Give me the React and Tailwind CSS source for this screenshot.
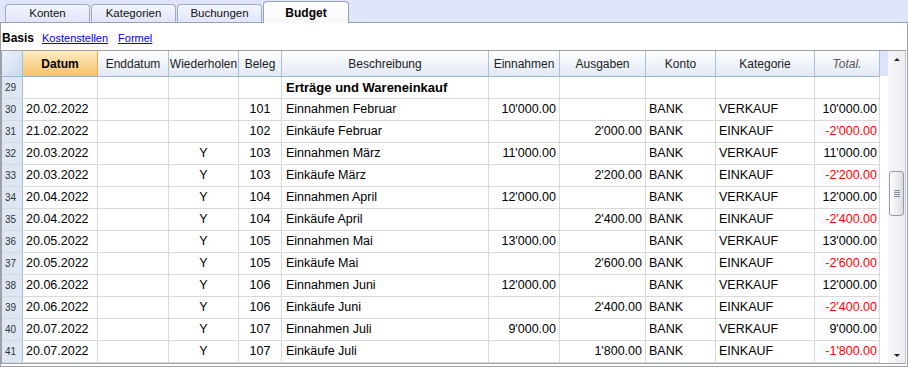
import React from 'react';

const rows = [
  ['30', '20.02.2022', '', '101', 'Einnahmen Februar', "10'000.00", '', 'VERKAUF', "10'000.00"],
  ['31', '21.02.2022', '', '102', 'Einkäufe Februar', '', "2'000.00", 'EINKAUF', "-2'000.00"],
  ['32', '20.03.2022', 'Y', '103', 'Einnahmen März', "11'000.00", '', 'VERKAUF', "11'000.00"],
  ['33', '20.03.2022', 'Y', '103', 'Einkäufe März', '', "2'200.00", 'EINKAUF', "-2'200.00"],
  ['34', '20.04.2022', 'Y', '104', 'Einnahmen April', "12'000.00", '', 'VERKAUF', "12'000.00"],
  ['35', '20.04.2022', 'Y', '104', 'Einkäufe April', '', "2'400.00", 'EINKAUF', "-2'400.00"],
  ['36', '20.05.2022', 'Y', '105', 'Einnahmen Mai', "13'000.00", '', 'VERKAUF', "13'000.00"],
  ['37', '20.05.2022', 'Y', '105', 'Einkäufe Mai', '', "2'600.00", 'EINKAUF', "-2'600.00"],
  ['38', '20.06.2022', 'Y', '106', 'Einnahmen Juni', "12'000.00", '', 'VERKAUF', "12'000.00"],
  ['39', '20.06.2022', 'Y', '106', 'Einkäufe Juni', '', "2'400.00", 'EINKAUF', "-2'400.00"],
  ['40', '20.07.2022', 'Y', '107', 'Einnahmen Juli', "9'000.00", '', 'VERKAUF', "9'000.00"],
  ['41', '20.07.2022', 'Y', '107', 'Einkäufe Juli', '', "1'800.00", 'EINKAUF', "-1'800.00"],
];

const cols = 'grid grid-cols-[21px_75px_71px_70px_43px_207px_71px_86px_70px_99px_65px]';
const cell = 'border-r border-[#d9d9d9] h-full flex items-center overflow-hidden whitespace-nowrap';
const head = 'border-r border-[#a9c0da] h-full flex items-center justify-center bg-gradient-to-b from-[#fdfeff] to-[#e2e9f5]';

const Tab = ({ label, active }) =>
  active ? (
    <div className="w-[86px] h-[22px] -mb-px relative z-10 flex items-center justify-center rounded-t-[4px] border border-b-0 border-[#98a2b3] bg-gradient-to-b from-white to-[#f7f7f7] text-[12px] font-bold text-black">
      {label}
    </div>
  ) : (
    <div className="w-[85px] h-[18px] flex items-center justify-center rounded-t-[4px] border border-b-0 border-[#a3abbb] bg-gradient-to-b from-[#f4f6fe] to-[#dfe6fa] text-[11.5px] text-[#111]">
      {label}
    </div>
  );

const Scrollbar = () => (
  <div className="w-[17px] h-full flex flex-col bg-gradient-to-r from-[#f7f6f9] to-[#eeecf1]">
    <div className="h-[16px] flex items-center justify-center">
      <div className="w-0 h-0 border-l-[3px] border-r-[3px] border-b-[3px] border-l-transparent border-r-transparent border-b-[#222]" />
    </div>
    <div className="h-[104px]" />
    <div className="mx-[1px] h-[45px] rounded-[3px] border border-[#9b9ba8] bg-gradient-to-r from-white to-[#dcdce6] flex flex-col items-center justify-center gap-[1px]">
      <div className="w-[6px] h-px bg-[#8a8a96]" />
      <div className="w-[6px] h-px bg-[#8a8a96]" />
      <div className="w-[6px] h-px bg-[#8a8a96]" />
      <div className="w-[6px] h-px bg-[#8a8a96]" />
    </div>
    <div className="flex-1" />
    <div className="h-[16px] flex items-center justify-center">
      <div className="w-0 h-0 border-l-[3px] border-r-[3px] border-t-[3px] border-l-transparent border-r-transparent border-t-[#222]" />
    </div>
  </div>
);

const App = () => {
  return (
    <div className="w-[908px] h-[367px] overflow-hidden bg-white font-['Liberation_Sans',Arial,sans-serif]">
      {/* Tabs */}
      <div className="h-[23px] bg-[#dfe6fa] border-b border-[#98a2b3] flex items-end pl-[5px] gap-[1px]">
        <Tab label="Konten" />
        <Tab label="Kategorien" />
        <Tab label="Buchungen" />
        <Tab label="Budget" active />
      </div>

      <div className="h-[344px] border-l border-r border-b border-[#98a2b3] flex flex-col">
        {/* Sub views */}
        <div className="h-[27px] flex items-center pl-px pt-[3px] text-[11px]">
          <span className="font-bold text-[12px] text-black mr-[8px]">Basis</span>
          <span className="text-[#0000ee] underline mr-[10px]">Kostenstellen</span>
          <span className="text-[#0000ee] underline">Formel</span>
        </div>

        {/* Grid */}
        <div className="w-[905px] h-[314px] border border-[#a0a0a0] border-r-[#c8c8c8] flex">
          <div className="w-[878px] flex flex-col">
            <div className={`${cols} h-[26px] border-b border-[#9fb5d0] text-[12px] text-[#222]`}>
              <div className="border-r border-[#a9c0da] h-full bg-gradient-to-br from-[#eef3fb] to-[#c9d8ee]" />
              <div className="border-r border-[#f0a848] h-full flex items-center justify-center font-bold text-black bg-gradient-to-b from-[#fdebc0] to-[#f7c266]">
                Datum
              </div>
              <div className={head}>Enddatum</div>
              <div className={head}>Wiederholen</div>
              <div className={head}>Beleg</div>
              <div className={head}>Beschreibung</div>
              <div className={head}>Einnahmen</div>
              <div className={head}>Ausgaben</div>
              <div className={head}>Konto</div>
              <div className={head}>Kategorie</div>
              <div className={`${head} italic text-[#555]`}>Total.</div>
            </div>

            <div className={`${cols} h-[22px] border-b border-[#d9d9d9] text-[12.5px]`}>
              <div className="border-r border-[#a9bcd6] bg-[#dde7f4] h-full flex items-center pl-[3px] text-[10px] text-[#333]">29</div>
              <div className={cell} />
              <div className={cell} />
              <div className={cell} />
              <div className={cell} />
              <div className={`${cell} pl-[4px] font-bold text-[13px]`}>Erträge und Wareneinkauf</div>
              <div className={cell} />
              <div className={cell} />
              <div className={cell} />
              <div className={cell} />
              <div className={cell} />
            </div>

            {rows.map((r) => (
              <div key={r[0]} className={`${cols} h-[22px] border-b border-[#d9d9d9] text-[12.5px] text-black`}>
                <div className="border-r border-[#a9bcd6] bg-[#dde7f4] h-full flex items-center pl-[3px] text-[10px] text-[#333]">
                  {r[0]}
                </div>
                <div className={`${cell} pl-[3px]`}>{r[1]}</div>
                <div className={cell} />
                <div className={`${cell} justify-center`}>{r[2]}</div>
                <div className={`${cell} justify-center`}>{r[3]}</div>
                <div className={`${cell} pl-[4px]`}>{r[4]}</div>
                <div className={`${cell} justify-end pr-[3px]`}>{r[5]}</div>
                <div className={`${cell} justify-end pr-[3px]`}>{r[6]}</div>
                <div className={`${cell} pl-[3px]`}>BANK</div>
                <div className={`${cell} pl-[3px]`}>{r[7]}</div>
                <div className={`${cell} justify-end pr-[2px] ${r[8].startsWith('-') ? 'text-[#ff0000]' : ''}`}>
                  {r[8]}
                </div>
              </div>
            ))}
          </div>

          <div className="w-[8px] flex flex-col">
            <div className="h-[25px] bg-[#dbe4f8]" />
          </div>

          <Scrollbar />
        </div>
      </div>
    </div>
  );
};

export default App;
